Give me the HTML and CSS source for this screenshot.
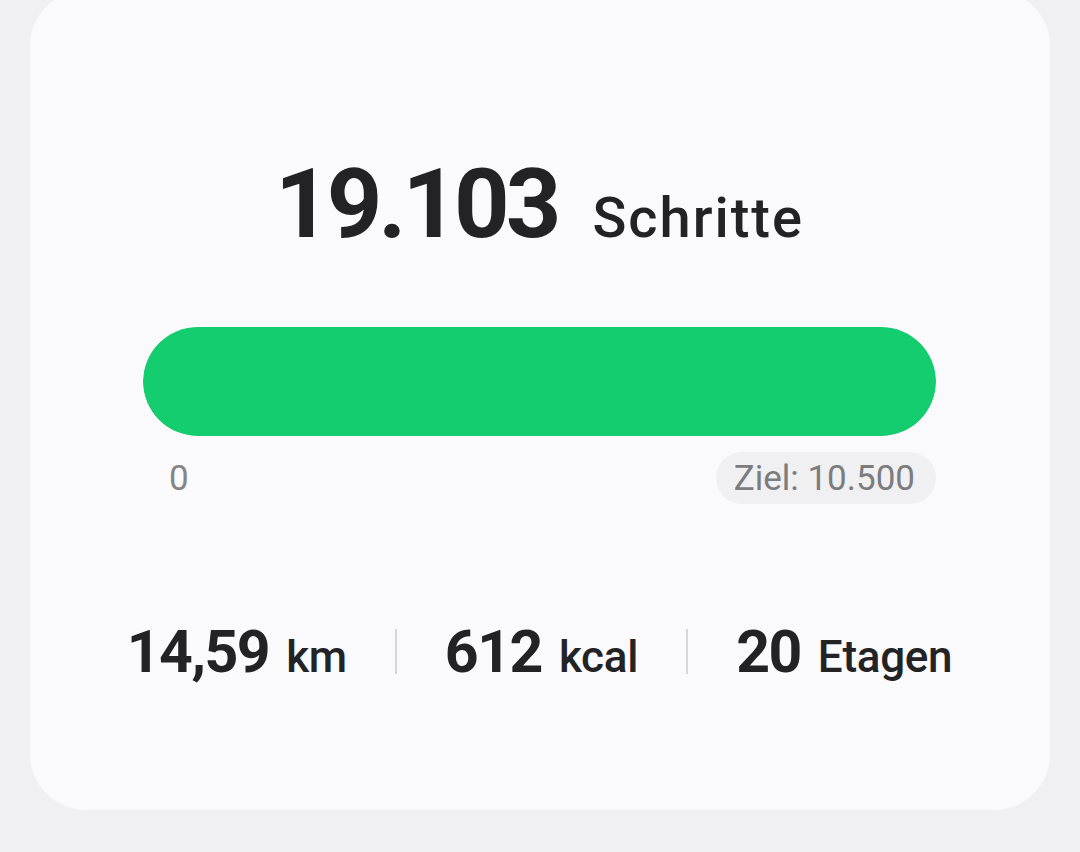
FILE: index.html
```html
<!DOCTYPE html>
<html lang="de">
<head>
<meta charset="utf-8">
<title>Schritte</title>
<link rel="stylesheet" href="styles.css">
</head>
<body>
<main class="card">
  <h1 class="steps">
    <span class="steps-value">19.103</span>
    <span class="steps-unit">Schritte</span>
  </h1>
  <div class="bar"><div class="bar-fill" style="width:100%"></div></div>
  <div class="bar-labels">
    <span class="bar-min">0</span>
    <span class="goal">Ziel: 10.500</span>
  </div>
  <div class="stats">
    <div class="stat"><span class="stat-value">14,59</span><span class="stat-unit">km</span></div>
    <span class="divider"></span>
    <div class="stat"><span class="stat-value">612</span><span class="stat-unit">kcal</span></div>
    <span class="divider"></span>
    <div class="stat"><span class="stat-value">20</span><span class="stat-unit">Etagen</span></div>
  </div>
</main>
</body>
</html>
```
FILE: styles.css
```css
html, body {
  margin: 0;
  padding: 0;
  background: #f0f0f2;
  height: 852px;
  overflow: hidden;
}
body {
  font-family: Roboto, "Noto Sans", sans-serif;
  color: #232326;
}
.card {
  margin: -10px 30px 0;
  padding: 166px 114px 129px 113px;
  background: #fafafc;
  border-radius: 56px;
}
.steps {
  margin: 0;
  display: flex;
  justify-content: center;
  align-items: baseline;
  gap: 35px;
  font-weight: 700;
  line-height: 1;
}
.steps-value {
  font-size: 97px;
  letter-spacing: -4px;
}
.steps-unit {
  font-size: 56px;
  font-weight: 500;
  letter-spacing: 2px;
}
.bar {
  margin-top: 74px;
  height: 109px;
  border-radius: 55px;
  background: #e6e6ea;
  overflow: hidden;
}
.bar-fill {
  height: 100%;
  background: #14cd6f;
  border-radius: 55px;
}
.bar-labels {
  margin-top: 16px;
  display: flex;
  justify-content: space-between;
  align-items: center;
  color: #858587;
  font-size: 35px;
  line-height: 1;
}
.bar-min {
  padding-left: 26px;
}
.goal {
  background: #f0f0f2;
  border-radius: 26px;
  padding: 0 21px 0 18px;
  height: 52px;
  display: flex;
  align-items: center;
  color: #7c7c7e;
}
.stats {
  margin-top: 118px;
  display: flex;
  justify-content: center;
  align-items: center;
  gap: 48px;
}
.stat {
  display: flex;
  align-items: baseline;
  gap: 17px;
  line-height: 1;
  font-weight: 700;
}
.stat-value {
  font-size: 59px;
  letter-spacing: -1.5px;
}
.stat-unit {
  font-size: 44px;
  font-weight: 500;
  letter-spacing: -0.3px;
}
.divider {
  display: block;
  flex: none;
  width: 2px;
  height: 45px;
  background: #d6d6d8;
}
```
